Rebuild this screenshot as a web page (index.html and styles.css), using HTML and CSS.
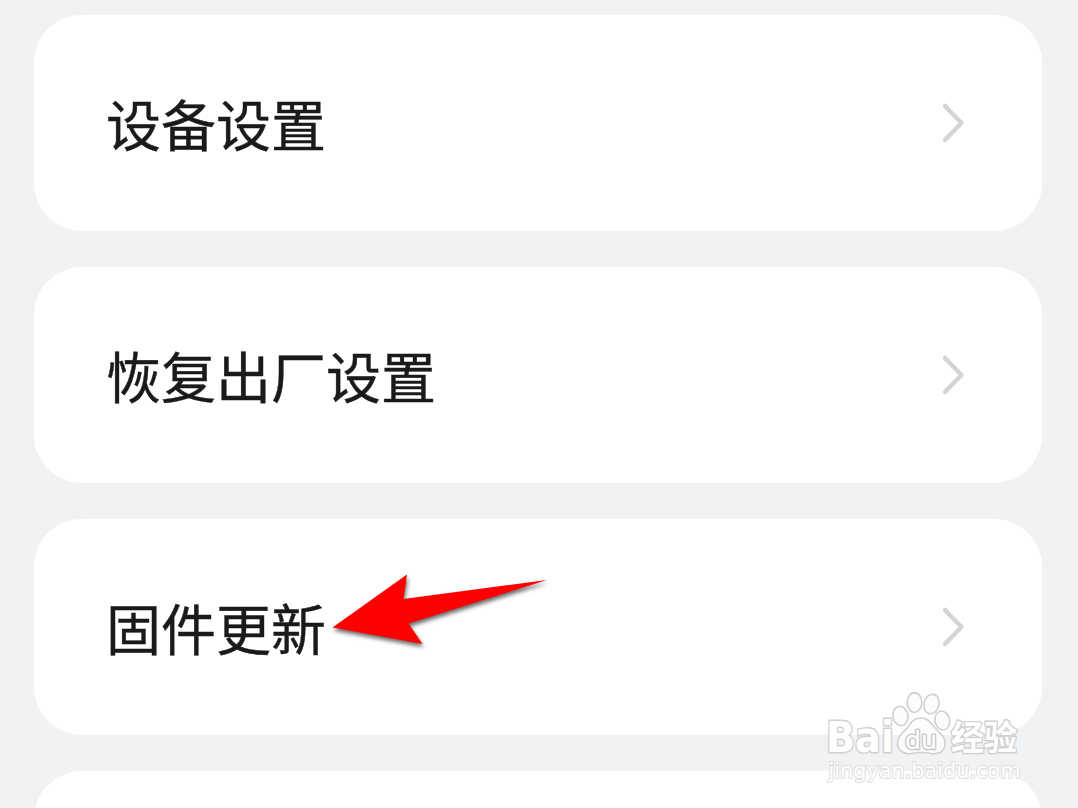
FILE: index.html
```html
<!DOCTYPE html>
<html lang="zh-CN">
<head>
    <meta charset="UTF-8">
    <meta name="viewport" content="width=device-width, initial-scale=1.0">
    <title>设备设置</title>
    <link rel="stylesheet" href="styles.css">
</head>
<body>
    <main class="settings">
        <a class="card">
            <span class="label">设备设置</span>
            <svg class="chevron" viewBox="0 0 24 42"><path d="M4 4 L20.5 21 L4 38"/></svg>
        </a>
        <a class="card">
            <span class="label">恢复出厂设置</span>
            <svg class="chevron" viewBox="0 0 24 42"><path d="M4 4 L20.5 21 L4 38"/></svg>
        </a>
        <a class="card">
            <span class="label">固件更新</span>
            <svg class="chevron" viewBox="0 0 24 42"><path d="M4 4 L20.5 21 L4 38"/></svg>
        </a>
        <div class="card"></div>
    </main>

    <svg class="arrow" viewBox="0 0 240 100">
        <path d="M12.5 67.5 L87 14.5 L83.5 39 L227 20 L88.5 63.5 L102.5 84 Z"/>
    </svg>

    <svg class="watermark" viewBox="0 0 230 128">
        <g class="brand">
            <text x="16" y="72" font-size="42" textLength="68" lengthAdjust="spacingAndGlyphs">Bai</text>
            <ellipse cx="90.5" cy="36" rx="7.5" ry="9.8" transform="rotate(-12 90.5 36)"/>
            <ellipse cx="104.5" cy="22.5" rx="7.3" ry="9.9"/>
            <ellipse cx="121.5" cy="24" rx="7.5" ry="9.9" transform="rotate(14 121.5 24)"/>
            <ellipse cx="132.3" cy="40.5" rx="7.3" ry="9.5" transform="rotate(-12 132.3 40.5)"/>
            <path d="M111 38 C119 38 121 44 126 49 C131 54 136 58 135 65 C134 72 128 74.5 121 73.5 C114 72 108 72 101 73.5 C94 74.5 88 71 87.5 64 C87 56 93 53 97 48 C101 43 103 38 111 38 Z"/>
            <text class="du" x="95" y="68.5" font-size="25" textLength="32" lengthAdjust="spacingAndGlyphs">du</text>
            <text class="cn" x="141" y="69.5" font-size="34" textLength="66" lengthAdjust="spacingAndGlyphs">经验</text>
        </g>
        <text class="site" x="18.5" y="97.5" font-size="20.5" textLength="192" lengthAdjust="spacingAndGlyphs">jingyan.baidu.com</text>
    </svg>
</body>
</html>
```
FILE: styles.css
```css
body {
    margin: 0;
    position: relative;
    background-color: #f1f2f4;
    font-family: "Noto Sans CJK SC", sans-serif;
}
.settings {
    display: flex;
    flex-direction: column;
    gap: 36px;
    height: 808px;
    box-sizing: border-box;
    overflow: hidden;
    padding: 15px 36px 0 34px;
}
.card {
    display: flex;
    align-items: center;
    justify-content: space-between;
    height: 216px;
    flex-shrink: 0;
    box-sizing: border-box;
    padding: 0 77px 0 72px;
    border-radius: 48px;
    background-color: #fff;
}
.label {
    padding-bottom: 3px;
    font-size: 55px;
    line-height: 80px;
    color: #1a1a1a;
    -webkit-text-stroke: 0.4px #1a1a1a;
}
.chevron {
    width: 24px;
    height: 42px;
    fill: none;
    stroke: #d4d4d4;
    stroke-width: 4.5;
    stroke-linecap: round;
    stroke-linejoin: round;
}
.arrow {
    position: absolute;
    left: 320px;
    top: 560px;
    width: 240px;
    height: 100px;
    overflow: visible;
    fill: #f00;
    filter: drop-shadow(1px 3px 2px rgba(0, 0, 0, 0.6));
}
.watermark {
    position: absolute;
    left: 810px;
    top: 680px;
    width: 230px;
    height: 128px;
    fill: #fff;
    stroke: #d0d0d0;
    stroke-width: 1.6;
    stroke-linejoin: round;
    font-family: "DejaVu Sans", Verdana, sans-serif;
    paint-order: stroke;
}
.brand ellipse,
.brand path {
    fill: #fcfcfc;
    paint-order: normal;
}
.brand text {
    font-weight: bold;
    stroke-width: 2.8;
}
.brand .du {
    font-weight: normal;
    stroke: #cbcbcb;
    stroke-width: 3;
}
.brand .cn {
    font-family: "Noto Sans CJK SC", sans-serif;
}
.site {
    stroke: #dedede;
    stroke-width: 2;
}
```
